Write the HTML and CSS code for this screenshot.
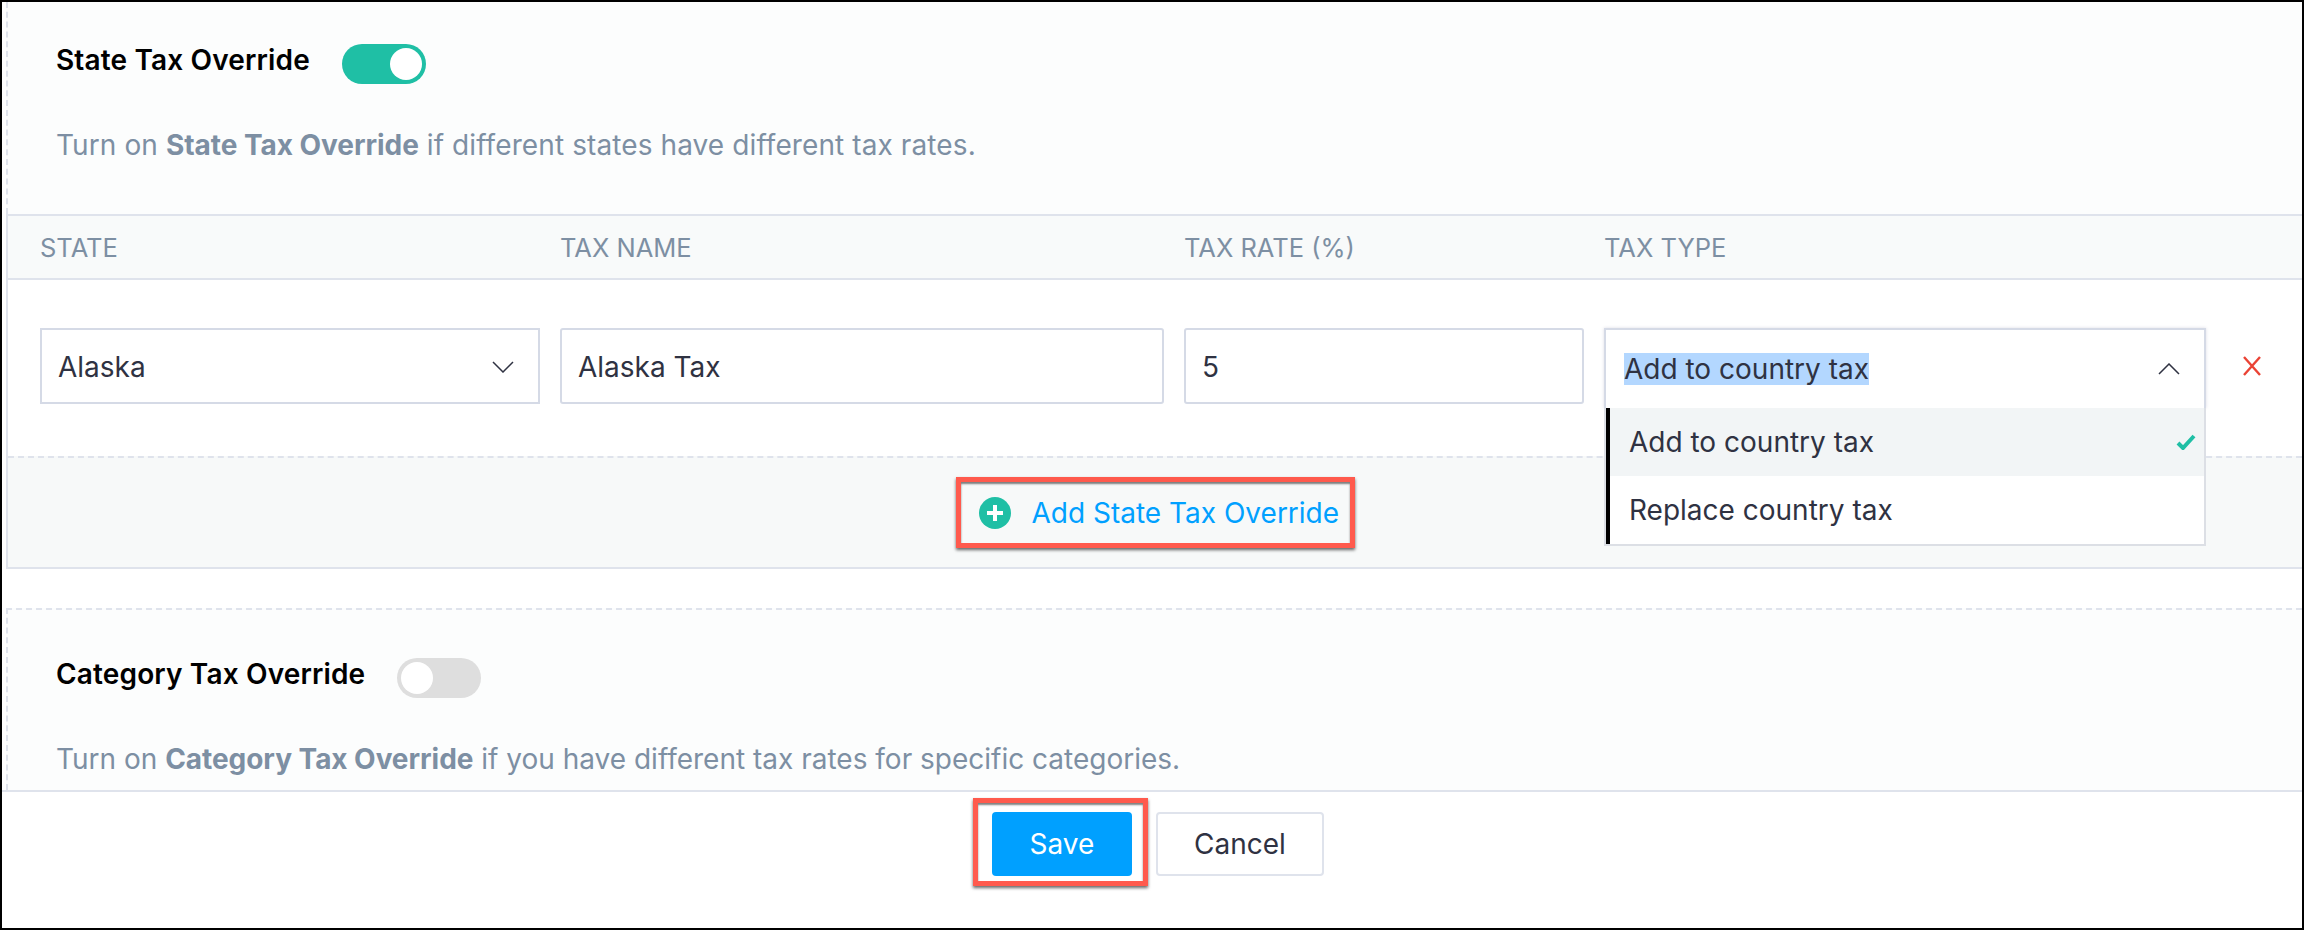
FILE: index.html
```html
<!DOCTYPE html>
<html lang="en">
<head>
    <meta charset="UTF-8">
    <meta name="viewport" content="width=device-width, initial-scale=1.0">
    <title>Tax Override</title>
    <link rel="stylesheet" href="styles.css">
</head>
<body>

    <div class="frame">

        <!-- State tax override -->
        <div class="override override-state">
            <div class="override-head">
                <span class="override-title">State Tax Override</span>
                <span class="toggle toggle-on"><span class="knob"></span></span>
            </div>
            <p class="override-desc">Turn on <strong>State Tax Override</strong> if different states have different tax rates.</p>
        </div>

        <div class="tax-table">
            <div class="tax-grid tax-head">
                <div>STATE</div>
                <div>TAX NAME</div>
                <div>TAX RATE (%)</div>
                <div>TAX TYPE</div>
            </div>

            <div class="tax-grid tax-row">
                <div class="field select">
                    <span>Alaska</span>
                    <svg class="chevron" viewBox="0 0 22 12"><path d="M1 1l10 10L21 1"/></svg>
                </div>
                <div class="field field-round">Alaska Tax</div>
                <div class="field field-round">5</div>
                <div class="type-cell">
                    <div class="field select select-open">
                        <span class="selected-text">Add to country tax</span>
                        <svg class="chevron" viewBox="0 0 22 12"><path d="M1 11L11 1l10 10"/></svg>
                    </div>
                    <!-- Open dropdown hangs over the add row -->
                    <div class="menu">
                        <div class="menu-item menu-item-active">
                            <span>Add to country tax</span>
                            <svg class="check" viewBox="0 0 20 16"><path d="M2 9l5 5L18 2"/></svg>
                        </div>
                        <div class="menu-item"><span>Replace country tax</span></div>
                    </div>
                </div>
                <svg class="remove" viewBox="0 0 20 20"><path d="M2 1l16 18M18 1L2 19"/></svg>
            </div>

            <div class="add-row">
                <a class="add-link">
                    <svg class="plus" viewBox="0 0 32 32">
                        <circle cx="16" cy="16" r="16"/>
                        <path d="M16 8v16M8 16h16"/>
                    </svg>
                    <span>Add State Tax Override</span>
                </a>
            </div>
        </div>

        <!-- Category tax override -->
        <div class="override override-category">
            <div class="override-head">
                <span class="override-title">Category Tax Override</span>
                <span class="toggle"><span class="knob"></span></span>
            </div>
            <p class="override-desc">Turn on <strong>Category Tax Override</strong> if you have different tax rates for specific categories.</p>
        </div>

        <div class="footer">
            <div class="save-mark"><button class="btn btn-save">Save</button></div>
            <button class="btn btn-cancel">Cancel</button>
        </div>

    </div>

</body>
</html>
```

FILE: styles.css
```css
html, body {
    margin: 0;
    padding: 0;
}

body {
    font-family: Inter, "Liberation Sans", sans-serif;
    background-color: #fff;
    color: #2f3242;
}

.frame {
    box-sizing: border-box;
    height: 930px;
    border: 2px solid #000;
    overflow: hidden;
    display: flex;
    flex-direction: column;
}

/* Override sections */
.override {
    margin-left: 4px;
    background-color: #fcfdfd;
    border-left: 2px dashed #dfe3ec;
    padding-left: 48px;
}

.override-state {
    padding-top: 42px;
    height: 212px;
    box-sizing: border-box;
}

.override-category {
    margin-top: 39px;
    border-top: 2px dashed #dfe3ec;
    padding-top: 48px;
    height: 182px;
    box-sizing: border-box;
}

.override-head {
    display: flex;
    align-items: flex-start;
    gap: 32px;
}

.override-title {
    font-size: 28px;
    font-weight: 600;
    letter-spacing: 0.15px;
    line-height: 32px;
    color: #000;
}

.override-desc {
    margin: 44px 0 0;
    font-size: 28px;
    line-height: 34px;
    color: #7d8fa3;
}

.override-state .override-desc {
    letter-spacing: 0.1px;
}

.override-desc strong {
    font-weight: 700;
    letter-spacing: -0.05px;
}

.toggle {
    box-sizing: border-box;
    width: 84px;
    height: 40px;
    border-radius: 20px;
    background-color: #dedede;
    padding: 4px;
    display: flex;
}

.toggle-on {
    background-color: #1fbfa5;
    justify-content: flex-end;
}

.knob {
    width: 32px;
    height: 32px;
    border-radius: 50%;
    background-color: #fff;
}

/* Table */
.tax-table {
    margin-left: 4px;
    border-left: 2px solid #dfe3ec;
}

.tax-grid {
    display: grid;
    grid-template-columns: 500px 604px 400px 602px 1fr;
    column-gap: 20px;
    padding-left: 32px;
}

.tax-head {
    height: 62px;
    align-items: center;
    background-color: #f8fafa;
    border-top: 2px solid #dfe3ec;
    border-bottom: 2px solid #dfe3ec;
    font-size: 25.5px;
    color: #7d8fa3;
}

.tax-row {
    height: 176px;
    padding-top: 48px;
    box-sizing: border-box;
}

.field {
    box-sizing: border-box;
    height: 76px;
    border: 2px solid #d5dae6;
    background-color: #fff;
    padding: 2px 16px 0;
    display: flex;
    align-items: center;
    font-size: 28px;
}

.field-round {
    border-radius: 3px;
}

.select {
    justify-content: space-between;
    padding-right: 24px;
}

.select-open {
    height: 80px;
    border-bottom: none;
    padding: 0 24px 0 18px;
    box-shadow: 0 0 3px rgba(80, 80, 130, 0.2);
}

.selected-text {
    background-color: #b3d7ff;
    line-height: 32px;
}

.chevron {
    width: 22px;
    height: 12px;
    fill: none;
    stroke: #2f3242;
    stroke-width: 1.5;
}

.type-cell {
    position: relative;
}

.menu {
    position: absolute;
    top: 80px;
    left: 0;
    right: 0;
    box-sizing: border-box;
    border: 2px solid #dcdfe5;
    border-top: none;
    background-color: #fff;
    z-index: 2;
}

.menu-item {
    height: 68px;
    display: flex;
    align-items: center;
    justify-content: space-between;
    padding: 0 8px 0 19px;
    border-left: 4px solid #000;
    font-size: 28px;
}

.menu-item-active {
    background-color: #f2f5f6;
}

.check {
    width: 20px;
    height: 16px;
    fill: none;
    stroke: #1fbfa5;
    stroke-width: 4;
}

.remove {
    width: 20px;
    height: 20px;
    margin: 28px 0 0 16px;
    fill: none;
    stroke: #ea4335;
    stroke-width: 2.4;
}

/* Add row */
.add-row {
    height: 109px;
    border-top: 2px dashed #dfe3ec;
    border-bottom: 2px solid #dfe3ec;
    background-color: #f7f9f9;
    display: flex;
    justify-content: center;
    align-items: center;
}

.add-link {
    box-sizing: border-box;
    width: 399px;
    height: 71px;
    border: 5px solid #ff5a4d;
    box-shadow: 0 2px 3px rgba(0, 0, 0, 0.6), inset 0 2px 2px rgba(0, 0, 0, 0.5);
    padding-left: 18px;
    display: flex;
    align-items: center;
    gap: 21px;
    font-size: 28px;
    white-space: nowrap;
    color: #00a0ff;
}

.plus {
    width: 32px;
    height: 32px;
    flex-shrink: 0;
}

.plus circle {
    fill: #1fbfa5;
}

.plus path {
    fill: none;
    stroke: #fff;
    stroke-width: 4;
}

/* Footer */
.footer {
    border-top: 2px solid #dfe3ec;
    flex: 1;
    display: flex;
    justify-content: center;
    align-items: flex-start;
    gap: 8px;
    padding: 6px 7px 0 0;
}

.save-mark {
    box-sizing: border-box;
    width: 175px;
    height: 88px;
    border: 5px solid #ff5a4d;
    box-shadow: 0 2px 3px rgba(0, 0, 0, 0.6), inset 0 2px 2px rgba(0, 0, 0, 0.5);
    padding: 9px 0 0 14px;
}

.btn {
    box-sizing: border-box;
    height: 64px;
    border-radius: 4px;
    font-family: inherit;
    font-size: 28px;
    cursor: pointer;
}

.btn-save {
    width: 140px;
    border: none;
    background-color: #00a0ff;
    color: #fff;
}

.btn-cancel {
    width: 168px;
    margin-top: 14px;
    border: 2px solid #dfe3ec;
    background-color: #fff;
    color: #2f3242;
}
```
